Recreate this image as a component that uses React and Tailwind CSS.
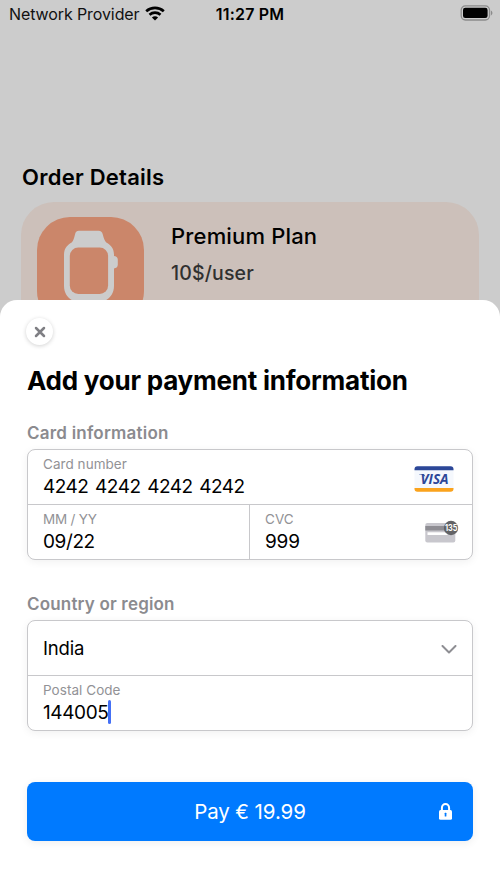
function WifiIcon() {
  return (
    <svg className="mb-[1px] ml-[6px] h-[15px] w-[20px]" viewBox="0 0 20 15" fill="none" stroke="#000" strokeWidth="2.7">
      <path d="M1.2 5.2C6.2.7 13.8.7 18.8 5.2" />
      <path d="M4.5 8.8c3.2-2.8 7.8-2.8 11 0" />
      <path d="M10 14.4 6.9 11.4c1.8-1.5 4.4-1.5 6.2 0Z" fill="#000" stroke="none" />
    </svg>
  );
}

function BatteryIcon() {
  return (
    <svg className="mb-[2px] h-[16px] w-[33px]" viewBox="0 0 33 16">
      <rect x="1.2" y=".9" width="28.3" height="14.1" rx="4.2" fill="none" stroke="#8b8b8b" strokeWidth="1.3" />
      <rect x="3" y="2.8" width="24.6" height="10.3" rx="2.3" fill="#000" />
      <path d="M30.9 5.6c2 .8 2 4 0 4.8Z" fill="#8b8b8b" />
    </svg>
  );
}

function WatchIcon() {
  return (
    <svg className="h-[84px] w-[107px]" viewBox="37 217 107 84">
      <path d="M79 230.8h19.4c2.6 0 3.8 1.4 4.4 3.6 1.1 4 1.7 6.2 3.5 8 3.600 2.200 7.700 5 7.700 12.100v1.500c2 0 3.800 1.400 3.800 3.600v5.200c0 2.200-1.800 3.600-3.800 3.600v17.600c0 8-4.600 12.600-9.600 15H73.600c-5-2.400-9.600-7-9.600-15v-31.500c0-7.100 4.100-9.900 7.700-12.100 1.800-1.800 2.200-4 3.300-8 .6-2.200 1.400-3.600 4-3.600Z" fill="#ccc" />
      <rect x="69.800" y="247.500" width="38.300" height="46.500" rx="8.500" fill="#cb866a" />
    </svg>
  );
}

function VisaLogo() {
  return (
    <svg className="h-[27px] w-[40px]" viewBox="0 0 40 27">
      <rect x=".5" y=".3" width="39" height="25.400" rx="3" fill="#f5f8fd" />
      <path d="M.5 4.300V3.300a3 3 0 0 1 3-3h33a3 3 0 0 1 3 3v1Z" fill="#2c4798" />
      <path d="M.5 21.900h39v.8a3 3 0 0 1-3 3h-33a3 3 0 0 1-3-3Z" fill="#fba31c" />
      <text x="6.600" y="17.700" textLength="28" lengthAdjust="spacingAndGlyphs" fill="#2c4798" className="font-['Open_Sans',sans-serif] text-[13.500px] font-bold italic">VISA</text>
      <path d="M5 8.200h5l1.500 2.500C9.500 9.100 7 8.700 5 8.500Z" fill="#2c4798" />
    </svg>
  );
}

function CvcIcon() {
  return (
    <svg className="h-[24px] w-[36px]" viewBox="0 0 36 24">
      <rect x="1.300" y="3" width="30" height="19.500" rx="2" fill="#c8c7cd" />
      <rect x="1.300" y="6" width="30" height="4.500" fill="#8e8d93" />
      <rect x="3.500" y="12.300" width="20" height="2.700" fill="#fff" />
      <circle cx="27" cy="8" r="7.200" fill="#636366" />
      <text x="27.200" y="11" textAnchor="middle" textLength="12.500" lengthAdjust="spacingAndGlyphs" fill="#fff" className="font-['Inter',sans-serif] text-[8.500px] font-bold">135</text>
    </svg>
  );
}

function Field({ label, value, labelSpacing = "tracking-[0.05px]", spacing = "tracking-[-0.4px]", cursor = false, children, className = "" }) {
  return (
    <div className={`flex items-start justify-between pl-[15px] ${className}`}>
      <div>
        <div className={`mt-[6px] h-[17px] text-[13.5px] leading-[17px] text-[#929296] ${labelSpacing}`}>{label}</div>
        <div className="mt-[2px] flex h-[24px] items-center text-[19px] leading-[24px]">
          <span className={spacing}>{value}</span>
          {cursor && <span className="mb-[2px] h-[24px] w-[2.5px] rounded-full bg-[#4470f5]" />}
        </div>
      </div>
      {children}
    </div>
  );
}

export default function App() {
  return (
    <main className="h-[889px] w-[500px] overflow-hidden bg-[#ccc] font-['Inter',sans-serif] text-black">
      <section className="h-[300px] overflow-hidden">
        <header className="grid h-[28px] grid-cols-[1fr_auto_1fr] items-center pl-[9px] pr-[7px] text-[16px] leading-[20px]">
          <div className="flex items-center text-[#111]">
            <span className="tracking-[-0.1px]">Network Provider</span>
            <WifiIcon />
          </div>
          <span className="-ml-[2px] font-semibold tracking-[0.2px]">11:27 PM</span>
          <div className="flex justify-end"><BatteryIcon /></div>
        </header>
        <h2 className="mt-[134px] pl-[22px] text-[22px] font-semibold leading-[30px] tracking-[0.25px]">Order Details</h2>
        <div className="ml-[21px] mt-[9.500px] flex h-[140px] w-[458px] rounded-[33px] bg-[#ccc0ba] pl-[16px] pt-[15.500px]">
          <div className="h-[107px] w-[107px] overflow-hidden rounded-[33px] bg-[#cb866a]"><WatchIcon /></div>
          <div className="pl-[27px] pt-[4px]">
            <div className="text-[22px] font-medium leading-[30px] tracking-[0.17px]">Premium Plan</div>
            <div className="mt-[9px] text-[19.500px] font-medium leading-[26px] tracking-[0.15px] text-[#303030]">10$/user</div>
          </div>
        </div>
      </section>

      <section className="h-[589px] rounded-t-[17px] bg-white px-[27px] pt-[18px]">
        <button className="-ml-[1px] flex h-[27px] w-[27px] items-center justify-center rounded-full bg-white shadow-[0_1px_4px_rgba(0,0,0,0.18)]">
          <svg className="h-[12px] w-[12px]" viewBox="0 0 12 12" stroke="#7f7f84" strokeWidth="2.500" strokeLinecap="round">
            <path d="m2 2 8 8M10 2 2 10" />
          </svg>
        </button>
        <h1 className="mt-[19px] text-[26px] font-bold leading-[34px] tracking-[-0.23px]">Add your payment information</h1>
        <h3 className="mt-[24px] h-[22px] text-[17px] font-semibold leading-[22px] tracking-[0.22px] text-[#8b8b8f]">Card information</h3>
        <div className="mt-[5px] h-[111px] w-[446px] rounded-[8px] border border-[#c8c8cb] bg-white shadow-[0_2px_8px_rgba(0,0,0,0.06)]">
          <Field
            label="Card number"
            value="4242 4242 4242 4242"
            spacing="tracking-[-0.5px] [word-spacing:1.8px]"
            className="h-[55px] border-b border-[#c8c8cb] pr-[18px]"
          >
            <div className="pt-[16px]"><VisaLogo /></div>
          </Field>
          <div className="grid h-[54px] grid-cols-[222px_1fr]">
            <Field label="MM / YY" value="09/22" labelSpacing="tracking-[-0.2px]" className="border-r border-[#c8c8cb]" />
            <Field label="CVC" value="999" spacing="tracking-[-0.2px]" className="pr-[12px]">
              <div className="pt-[15px]"><CvcIcon /></div>
            </Field>
          </div>
        </div>
        <h3 className="mt-[33px] h-[22px] text-[17px] font-semibold leading-[22px] tracking-[0.18px] text-[#8b8b8f]">Country or region</h3>
        <div className="mt-[5px] h-[111px] w-[446px] rounded-[8px] border border-[#c8c8cb] bg-white shadow-[0_2px_8px_rgba(0,0,0,0.06)]">
          <div className="flex h-[55px] items-center justify-between border-b border-[#c8c8cb] pl-[15px] pr-[15px] pt-[2px] text-[18.500px]">
            <span className="tracking-[-0.2px]">India</span>
            <svg className="h-[9px] w-[16px]" viewBox="0 0 16 9" fill="none" stroke="#8e8e93" strokeWidth="2" strokeLinecap="round" strokeLinejoin="round">
              <path d="m1.500 1 6.500 6.500L14.500 1" />
            </svg>
          </div>
          <Field label="Postal Code" value="144005" cursor />
        </div>
        <button className="mt-[51px] grid h-[59px] w-[446px] grid-cols-[1fr_auto_1fr] items-center rounded-[8px] bg-[#007aff] px-[21px] text-[20.500px] text-white shadow-[0_2px_8px_rgba(0,0,0,0.07)]">
          <span />
          <span className="pt-[1px] tracking-[-0.1px]">Pay € 19.99</span>
          <svg className="h-[17px] w-[13px] justify-self-end" viewBox="0 0 13 17">
            <path d="M2.900 8V5a3.600 3.900 0 0 1 7.200 0v3" fill="none" stroke="#fff" strokeWidth="2" />
            <rect y="7" width="13" height="9.800" rx="1.500" fill="#fff" />
            <rect x="5.700" y="9.800" width="1.700" height="3.800" rx=".5" fill="#007aff" />
          </svg>
        </button>
      </section>
    </main>
  );
}
